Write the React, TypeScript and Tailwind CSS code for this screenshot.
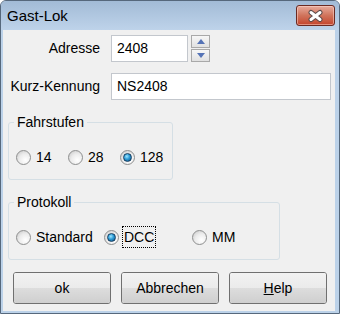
import React from "react";

const Radio: React.FC<{ checked?: boolean }> = ({ checked }) => (
  <span className="flex h-[15px] w-[15px] shrink-0 items-center justify-center rounded-full border border-[#8e8f8f] bg-[radial-gradient(circle_at_65%_70%,#ffffff_0%,#ececec_50%,#c4c4c4_100%)]">
    {checked && (
      <span className="h-[9px] w-[9px] rounded-full border border-[#173f62] bg-[radial-gradient(circle_at_40%_35%,#9fe6ff_0%,#2c9bd6_45%,#0c4777_100%)]" />
    )}
  </span>
);

const RadioItem: React.FC<{ label: string; checked?: boolean; focused?: boolean; width: string }> = ({
  label,
  checked,
  focused,
  width,
}) => (
  <div className={`flex h-[20px] items-center ${width}`}>
    <Radio checked={checked} />
    {focused ? (
      <span className="ml-[3px] flex h-[22px] items-center border border-dotted border-black px-[1px] leading-[20px]">
        {label}
      </span>
    ) : (
      <span className="ml-[5px] leading-[20px]">{label}</span>
    )}
  </div>
);

const Button: React.FC<{ children: React.ReactNode }> = ({ children }) => (
  <button className="flex h-[32px] w-[98px] flex-col overflow-hidden rounded-[3px] border border-[#707070] p-0 shadow-[inset_0_0_0_1px_#fcfcfc]">
    <span className="h-1/2 w-full bg-gradient-to-b from-[#f2f2f2] to-[#ebebeb]" />
    <span className="h-1/2 w-full bg-gradient-to-b from-[#dddddd] to-[#cfcfcf]" />
    <span className="-mt-[30px] flex h-[30px] w-full items-center justify-center text-[14px] text-black">
      {children}
    </span>
  </button>
);

const SpinButton: React.FC<{ up?: boolean }> = ({ up }) => (
  <div className="flex h-[13px] w-[19px] items-center justify-center border border-[#a9a9a9] bg-gradient-to-b from-[#f7f7f7] to-[#e1e1e1]">
    <svg width="8" height="5" viewBox="0 0 8 5">
      {up ? <path d="M0 5 L4 0 L8 5 Z" fill="#5573b6" /> : <path d="M0 0 L4 5 L8 0 Z" fill="#5573b6" />}
    </svg>
  </div>
);

export default function App() {
  return (
    <div className="flex h-[314px] w-[340px] flex-col rounded-t-[6px] border border-[#56687c] bg-[#bcd2e9] font-['Liberation_Sans',Arial,sans-serif] text-[14px] text-black">
      {/* title bar */}
      <div className="flex h-[29px] items-start justify-between rounded-t-[5px] bg-gradient-to-b from-[#a2bbd6] to-[#bed3ea] pl-[6px] pr-[4px] pt-[4px]">
        <span className="mt-[1px] text-[15px] leading-[20px]">Gast-Lok</span>
        <div className="flex h-[21px] w-[39px] items-center justify-center rounded-[3px] border border-[#6b2a22] bg-gradient-to-b from-[#e7ab9c] via-[#d0735b] to-[#c4432b] shadow-[inset_0_0_0_1px_rgba(255,220,210,0.5)]">
          <svg width="17" height="14" viewBox="0 0 17 14">
            <path d="M4 3.5 L13 10.5 M13 3.5 L4 10.5" stroke="#5b4a4a" strokeWidth="5" strokeLinecap="round" />
            <path d="M4 3.5 L13 10.5 M13 3.5 L4 10.5" stroke="#ffffff" strokeWidth="3" strokeLinecap="round" />
          </svg>
        </div>
      </div>

      {/* content */}
      <div className="mb-[2px] ml-[2px] mr-[4px] flex flex-1 flex-col bg-[#f0f0f0]">
        <div className="grid grid-cols-[92px_1fr] gap-x-[11px] gap-y-[11px] pl-[5px] pr-[4px] pt-[5px]">
          <span className="self-center text-right">Adresse</span>
          <div className="flex gap-[3px]">
            <div className="flex h-[27px] w-[77px] items-center border border-[#c3c7cd] bg-white pl-[5px]">2408</div>
            <div className="flex flex-col gap-[1px]">
              <SpinButton up />
              <SpinButton />
            </div>
          </div>
          <span className="self-center text-right">Kurz-Kennung</span>
          <div className="flex h-[27px] items-center border border-[#c3c7cd] bg-white pl-[5px]">NS2408</div>
        </div>

        <fieldset className="ml-[5px] mt-[14px] w-[164px] rounded-[3px] border border-[#d5dfe5] px-0 pb-[12px]">
          <legend className="ml-[5px] px-[3px] leading-[16px]">Fahrstufen</legend>
          <div className="mt-[17px] flex pl-[7px]">
            <RadioItem label="14" width="w-[52px]" />
            <RadioItem label="28" width="w-[52px]" />
            <RadioItem label="128" checked width="w-[52px]" />
          </div>
        </fieldset>

        <fieldset className="ml-[5px] mt-[14px] w-[272px] rounded-[3px] border border-[#d5dfe5] px-0 pb-[12px]">
          <legend className="ml-[5px] px-[3px] leading-[16px]">Protokoll</legend>
          <div className="mt-[17px] flex pl-[7px]">
            <RadioItem label="Standard" width="w-[88px]" />
            <RadioItem label="DCC" checked focused width="w-[88px]" />
            <RadioItem label="MM" width="w-[60px]" />
          </div>
        </fieldset>

        <div className="mt-[12px] flex gap-[10px] pl-[10px]">
          <Button>ok</Button>
          <Button>Abbrechen</Button>
          <Button>
            <span>
              <span className="underline">H</span>elp
            </span>
          </Button>
        </div>
      </div>
    </div>
  );
}
